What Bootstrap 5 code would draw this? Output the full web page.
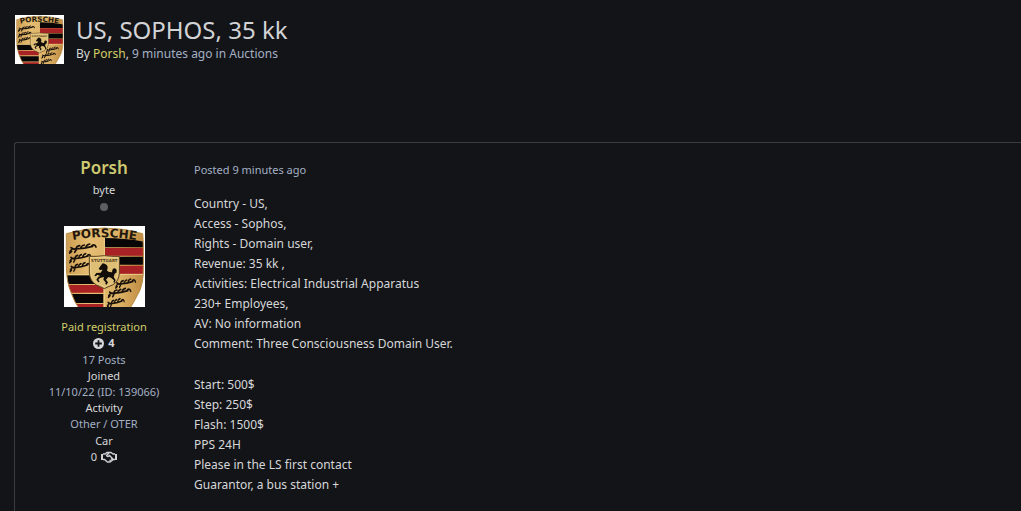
<!DOCTYPE html>
<html lang="en">
<head>
<meta charset="utf-8">
<meta name="viewport" content="width=device-width, initial-scale=1">
<title>US, SOPHOS, 35 kk</title>
<link href="https://cdn.jsdelivr.net/npm/bootstrap@5.3.0/dist/css/bootstrap.min.css" rel="stylesheet">
<style>
  body { background: #131418; color: #d6d7d9; font-family: "Segoe UI", "Noto Sans", "Open Sans", sans-serif; font-size: 12px; line-height: 16px; }
  a { color: inherit; text-decoration: none; }
  a:hover { text-decoration: underline; }
  .topic-head { padding: 15px 15px 0; gap: 12px; margin-bottom: 78px; }
  .topic-title { font-size: 24px; line-height: 30px; font-weight: 400; color: #d2d3d5; }
  .topic-meta { padding-top: 1px; }
  .soft { color: #a3b0c4; }
  .gold { color: #d2ce69; }
  .avatar-sm { width: 49px; height: 49px; }
  .avatar-lg { width: 81px; height: 81px; }
  .post { margin-left: 14px; border: solid #3b3c3f; border-width: 1px 0 0 1px; border-top-left-radius: 3px; }
  .author { width: 178px; padding-top: 15px; font-size: 11px; }
  .author-name { font-size: 17px; line-height: 20px; font-weight: 600; color: #cdc970; }
  .status-dot { width: 8px; height: 8px; background: #5e5e60; margin: 5px 0 15px; }
  .stat { padding-top: 1px; }
  .post-body { padding: 19px 0 0 1px; }
  .post-date { font-size: 11px; }
  .post-text { font-size: 12px; line-height: 20px; }
  .post-text p { margin-bottom: 21px; }
</style>
</head>
<body class="d-flex flex-column min-vh-100">

<header class="topic-head d-flex align-items-start">
  <a href="#" aria-label="Porsh profile"><svg class="avatar-sm d-block" viewBox="12 12 243 243" aria-hidden="true"><use href="#crest"/></svg></a>
  <div>
    <h1 class="topic-title mb-0">US, SOPHOS, 35 kk</h1>
    <div class="topic-meta">By <a href="#" class="gold">Porsh</a>, <span class="soft">9 minutes ago in <a href="#">Auctions</a></span></div>
  </div>
</header>

<article class="post d-flex flex-grow-1">
  <aside class="author d-flex flex-column align-items-center flex-shrink-0 text-center">
    <h2 class="author-name mb-1"><a href="#">Porsh</a></h2>
    <div>byte</div>
    <span class="status-dot rounded-circle" role="img" aria-label="Offline"></span>
    <a href="#" aria-label="Porsh profile">
      <svg class="avatar-lg d-block" viewBox="12 12 243 243" aria-hidden="true">
        <defs>
          <clipPath id="shield"><path d="M19 35Q75 18 133 18T248 35Q251 64 250 130Q252 190 232 220Q222 240 208 262H59Q44 242 34 214Q19 180 19 130Z"/></clipPath>
          <linearGradient id="brass"><stop offset="0" stop-color="#c9994e"/><stop offset=".3" stop-color="#e5bd73"/><stop offset=".7" stop-color="#dab064"/><stop offset="1" stop-color="#bd883f"/></linearGradient>
          <path id="arc" d="M6 61Q133 30 261 61"/>
          <path id="antler" fill="none" stroke="#17100a" stroke-width="5" stroke-linecap="round" d="M0 18Q6 8 16 11Q46 10 68 3M3 7L13 12M18 10Q20 2 29 1M32 9Q35 0 43-1M47 7Q50-3 59-4M63 4Q69-4 75 0L78 5M5 18L-1 23M20 12L14 21"/>
        </defs>
        <g id="crest">
          <path fill="#fff" d="M12 12H255V255H12Z"/>
          <g clip-path="url(#shield)">
            <path fill="url(#brass)" d="M12 12H255V260H12Z"/>
            <path fill="#080606" d="M135 48Q195 48 252 59V76H135ZM135 104H252V128H135ZM12 160H130V186H12ZM12 216H130V243H12Z"/>
            <path fill="#a82125" d="M135 78H252V101H135ZM135 131H252V156H135ZM12 189H130V212H12ZM12 246H130V260H12Z"/>
            <path d="M133 47V258M20 158H130M135 157H250" fill="none" stroke="#edcf88" stroke-width="3"/>
          </g>
          <path d="M19 35Q75 18 133 18T248 35Q251 64 250 130Q252 190 232 220Q222 240 208 262H59Q44 242 34 214Q19 180 19 130Z" fill="none" stroke="#b88b45" stroke-width="3"/>
          <text font-family="DejaVu Sans, sans-serif" font-weight="700" font-size="36" fill="#25180d"><textPath href="#arc" startOffset="50%" text-anchor="middle">PORSCHE</textPath></text>
          <use href="#antler" transform="translate(30 70)"/>
          <use href="#antler" transform="translate(30 99) scale(.8 1)"/>
          <use href="#antler" transform="translate(31 126) scale(.75 1)"/>
          <use href="#antler" transform="translate(168 175) scale(.75 1)"/>
          <use href="#antler" transform="translate(146 203) scale(.85 1)"/>
          <use href="#antler" transform="translate(142 234) scale(.65 1)"/>
          <path d="M88 103Q111 104 133 101Q156 104 178 103V153Q177 178 158 189Q143 194 133 200Q122 194 109 189Q90 178 88 153Z" fill="#dfbf75" stroke="#5b421f" stroke-width="3"/>
          <path d="M92 107Q133 104 174 107V152Q171 177 133 195Q94 177 92 152Z" fill="none" stroke="#f1d798" stroke-width="2"/>
          <text x="133" y="119" text-anchor="middle" font-family="DejaVu Sans, sans-serif" font-weight="700" font-size="12" fill="#59421f">STUTTGART</text>
          <path fill="#120d08" d="M122 131L128 124L134 125Q143 128 143 137L141 146Q147 151 156 151Q157 139 163 139Q173 140 169 153Q164 152 163 158L161 165L167 174L164 182L160 180L162 175L153 167L145 165L138 173L144 181L140 188L136 186L137 181L130 173L132 165L120 168L115 173L119 180L115 181L109 173L115 164L121 162L112 158L108 163L103 161L109 153L122 152L128 143L120 144L116 140Z"/>
        </g>
      </svg>
    </a>
    <div class="gold mt-2 pt-1">Paid registration</div>
    <div class="fw-bold d-flex align-items-center gap-1">
      <svg width="11" height="11" viewBox="0 0 10 10" aria-hidden="true"><circle cx="5" cy="5" r="5" fill="#d6d7d9"/><path d="M5 2V8M2 5H8" stroke="#131418" stroke-width="1.600"/></svg>4
    </div>
    <div class="stat soft">17 Posts</div>
    <div>Joined</div>
    <div class="soft">11/10/22 (ID: 139066)</div>
    <div>Activity</div>
    <div class="soft">Other / OTER</div>
    <div class="stat">Car</div>
    <div class="d-flex align-items-center gap-1">0
      <svg width="16" height="12" viewBox="0 0 16 12" fill="none" stroke="#d0d1d3" aria-hidden="true"><path d="M1 3V9M15 3V9" stroke-width="2"/><path d="M2 3H4L6 1.500H10L12 3H14M2 8.500H3.500L6.500 11H9L12.500 8.500H14M8 2L5.500 4.500Q6.500 6.500 8.500 4.500L12 8M8.500 9L10 10M10 7.500L11.500 9" stroke-width="1.300"/></svg>
    </div>
  </aside>
  <div class="post-body">
    <div class="post-date soft mb-3">Posted 9 minutes ago</div>
    <div class="post-text">
      <p>Country - US,<br>Access - Sophos,<br>Rights - Domain user,<br>Revenue: 35 kk ,<br>Activities: Electrical Industrial Apparatus<br>230+ Employees,<br>AV: No information<br>Comment: Three Consciousness Domain User.</p>
      <p class="mb-0">Start: 500$<br>Step: 250$<br>Flash: 1500$<br>PPS 24H<br>Please in the LS first contact<br>Guarantor, a bus station +</p>
    </div>
  </div>
</article>
<script src="https://cdn.jsdelivr.net/npm/bootstrap@5.3.0/dist/js/bootstrap.bundle.min.js"></script>
</body>
</html>
